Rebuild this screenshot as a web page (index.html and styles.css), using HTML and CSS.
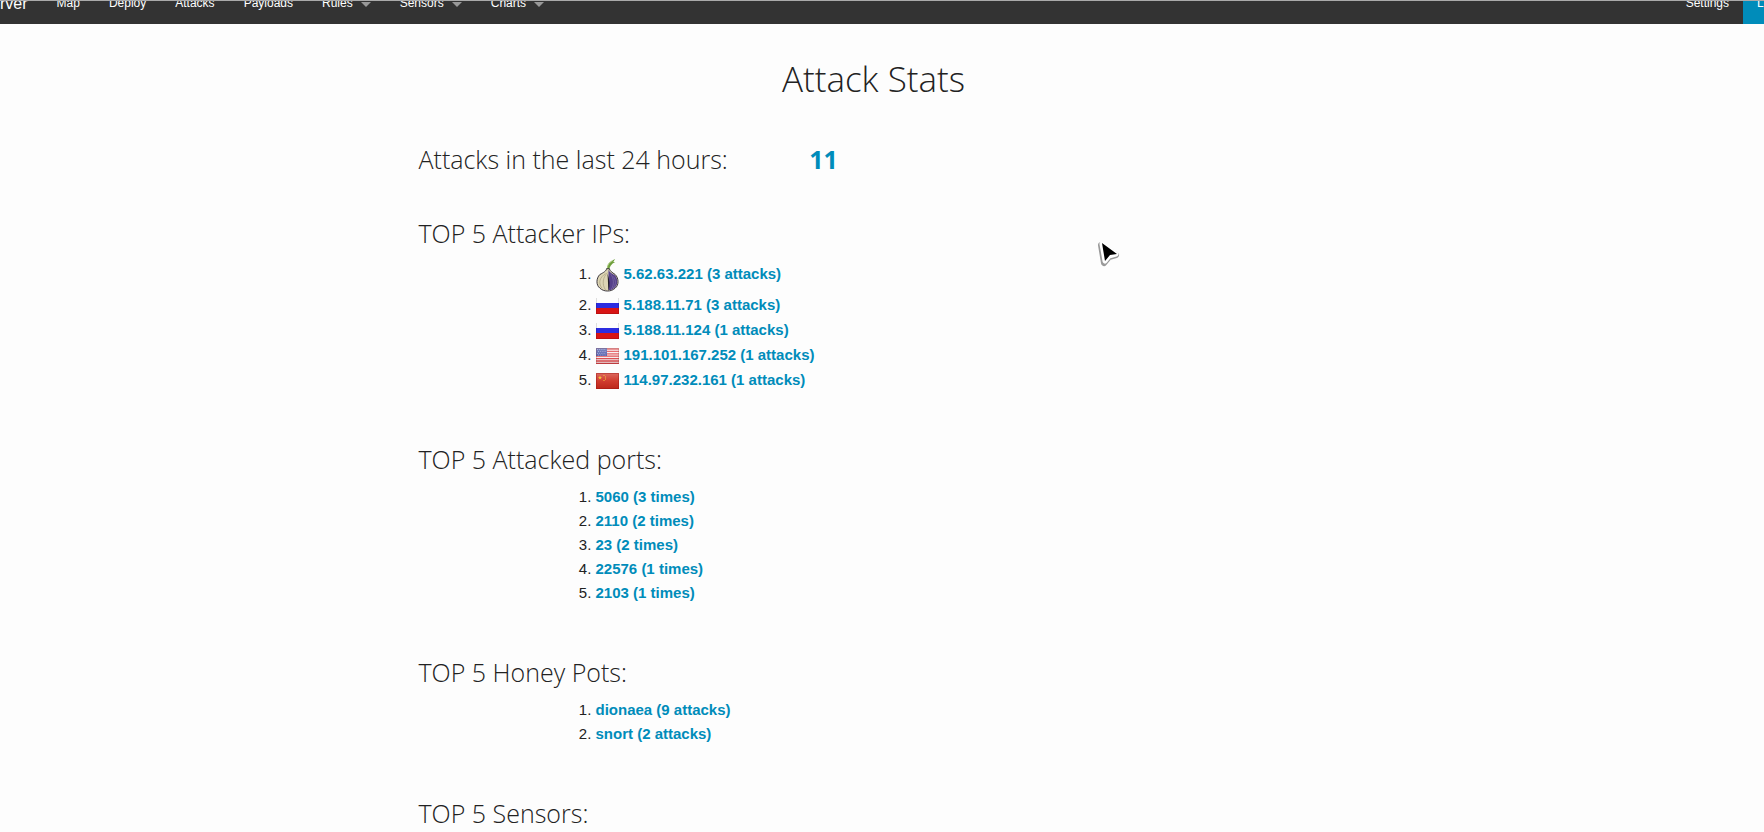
FILE: index.html
```html
<!DOCTYPE html>
<html lang="en">
<head>
<meta charset="utf-8">
<title>Attack Stats</title>
<link rel="stylesheet" href="styles.css">
</head>
<body>
<svg class="defs" aria-hidden="true">
  <defs>
    <linearGradient id="gloss" x1="0" y1="0" x2="0" y2="1">
      <stop offset="0" stop-color="#fff" stop-opacity=".3"/>
      <stop offset=".5" stop-color="#fff" stop-opacity=".08"/>
      <stop offset="1" stop-color="#000" stop-opacity=".08"/>
    </linearGradient>
    <symbol id="ru" viewBox="0 0 23 16">
      <path fill="#fdfdfd" d="M0 0h23v5H0z"/>
      <path fill="#2c2ce0" d="M0 5h23v6H0z"/>
      <path fill="#d81414" d="M0 10h23v6H0z"/>
      <path fill="none" stroke="#000" stroke-opacity=".12" d="M.5 0v15.5h22V0"/>
    </symbol>
  </defs>
</svg>
<header class="top-bar">
  <nav class="nav menu">
    <a class="brand" href="#">rver</a>
    <a href="#">Map</a>
    <a href="#">Deploy</a>
    <a href="#">Attacks</a>
    <a href="#">Payloads</a>
    <a class="has-menu" href="#">Rules</a>
    <a class="has-menu" href="#">Sensors</a>
    <a class="has-menu" href="#">Charts</a>
  </nav>
  <nav class="nav">
    <a href="#">Settings</a>
    <a class="logout" href="#">L</a>
  </nav>
</header>
<main class="page">
  <h1>Attack Stats</h1>
  <section class="total">
    <h2>Attacks in the last 24 hours:</h2>
    <a href="#">11</a>
  </section>
  <section class="ips">
    <h2>TOP 5 Attacker IPs:</h2>
    <ol>
      <li><a href="#"><svg class="onion" viewBox="0 0 24 34" preserveAspectRatio="none" aria-hidden="true">
        <path d="M11 11C12 6 14 3 20 0l-2 3 2 0C16 5 14 8 14 11z" fill="#6fa03c"/>
        <path d="M12 10C12 5 14 3 17 2" fill="none" stroke="#a9c77a"/>
        <path d="M11 10h3c0 2 3 4 6 6 4 4 4 11 0 14-4 4-12 4-16 0C0 27 0 20 4 16c4-2 7-4 7-6z" fill="#ddd5b4" stroke="#37333a"/>
        <path d="M13 11c1 3 4 4 7 6 3 4 3 9 0 12-2 2-4 3-7 3z" fill="#55408a"/>
        <path d="M12 15c2 6 3 12 1 18z" fill="#211c28"/>
        <path d="M15 15c4 5 4 12 1 16M18 18c3 4 3 8 0 12" fill="none" stroke="#8070a8" stroke-width=".7"/>
        <path d="M12 14C7 19 6 26 10 32M10 15C4 19 2 24 6 30" fill="none" stroke="#a69c7c" stroke-width=".7"/>
      </svg>5.62.63.221 (3 attacks)</a></li>
      <li><a href="#"><svg class="flag" aria-hidden="true"><use href="#ru"/></svg>5.188.11.71 (3 attacks)</a></li>
      <li><a href="#"><svg class="flag" aria-hidden="true"><use href="#ru"/></svg>5.188.11.124 (1 attacks)</a></li>
      <li><a href="#"><svg class="flag" viewBox="0 0 23 16" aria-hidden="true">
        <path fill="#f7efef" d="M0 0h23v16H0z"/>
        <path stroke="#e0474b" stroke-width="1.3" d="M0 1h23M0 3.4h23M0 5.8h23M0 8.2h23M0 10.6h23M0 13h23M0 15.3h23"/>
        <path fill="#4c58a8" d="M0 0h11v8H0z"/>
        <path stroke="#9098cc" stroke-dasharray="1 1.2" d="M1 1.5h9M2 3.5h8M1 5.5h9M2 7h8"/>
        <path fill="url(#gloss)" d="M0 0h23v16H0z"/>
        <path fill="none" stroke="#722" stroke-opacity=".2" d="M.5.5h22v15H.5z"/>
      </svg>191.101.167.252 (1 attacks)</a></li>
      <li><a href="#"><svg class="flag" viewBox="0 0 23 16" aria-hidden="true">
        <path fill="#cc2a1c" d="M0 0h23v16H0z"/>
        <path fill="url(#gloss)" d="M0 0h23v16H0z"/>
        <path fill="#f5c23c" d="M4 2.5l.6 1.4H6l-1.1 1 .4 1.5L4 5.5l-1.3.9.4-1.5-1.1-1h1.4zM7.5 2h1v1h-1zM9 3.5h1v1H9zM9 5.5h1v1H9zM7.5 7h1v1h-1z"/>
        <path fill="none" stroke="#911" stroke-opacity=".4" d="M.5.5h22v15H.5z"/>
      </svg>114.97.232.161 (1 attacks)</a></li>
    </ol>
  </section>
  <section>
    <h2>TOP 5 Attacked ports:</h2>
    <ol>
      <li><a href="#">5060 (3 times)</a></li>
      <li><a href="#">2110 (2 times)</a></li>
      <li><a href="#">23 (2 times)</a></li>
      <li><a href="#">22576 (1 times)</a></li>
      <li><a href="#">2103 (1 times)</a></li>
    </ol>
  </section>
  <section>
    <h2>TOP 5 Honey Pots:</h2>
    <ol>
      <li><a href="#">dionaea (9 attacks)</a></li>
      <li><a href="#">snort (2 attacks)</a></li>
    </ol>
  </section>
  <section>
    <h2>TOP 5 Sensors:</h2>
  </section>
</main>
<svg class="pointer" viewBox="0 0 22 26" aria-hidden="true">
  <path d="M2 3l15 10-7 2-5 6z" fill="#999" stroke="#999" stroke-width="6" stroke-linejoin="round"/>
  <path d="M3 2l14 10-7 2-4 5z" fill="#fff" stroke="#fff" stroke-width="5" stroke-linejoin="round"/>
  <path d="M3 1l15 11-7 1-5 6z" fill="#000"/>
</svg>
</body>
</html>
```
FILE: styles.css
```css
* {
  box-sizing: border-box;
}

html {
  overflow: hidden;
}

body {
  margin: 0;
  background: #fdfdfd;
  color: #222;
  font: 15px/24px "Liberation Sans", Arial, sans-serif;
}

a {
  color: #008cba;
  text-decoration: none;
}

.defs {
  position: absolute;
  width: 0;
  height: 0;
}

.top-bar {
  display: flex;
  justify-content: space-between;
  height: 24px;
  overflow: hidden;
  border-top: 1px solid #aaa;
  background: #333;
}

.nav {
  display: flex;
  align-items: flex-start;
}

.menu {
  gap: 1px;
}

.nav a {
  height: 45px;
  margin-top: -20px;
  padding: 0 14px;
  color: #fff;
  font-size: 12px;
  line-height: 45px;
}

.nav .brand {
  padding-left: 0;
  font-size: 16px;
}

.nav .has-menu::after {
  content: "";
  display: inline-block;
  margin-left: 8px;
  border: 5px solid transparent;
  border-top-color: #999;
  border-bottom: 0;
}

.nav .logout {
  width: 21px;
  padding: 0 0 0 14px;
  overflow: hidden;
  background: #008cba;
}

.page {
  max-width: 957px;
  margin: 0 auto;
  padding: 30px 32px 0 15px;
}

h1,
h2 {
  margin: 0;
  font-family: "Open Sans", sans-serif;
  font-weight: 300;
}

h1 {
  margin-bottom: 37px;
  font-size: 35px;
  line-height: 50px;
  text-align: center;
}

h2 {
  font-size: 25px;
  line-height: 36px;
}

section {
  margin-bottom: 49px;
}

section:last-child {
  margin-bottom: 0;
}

.total {
  display: grid;
  grid-template-columns: 5fr 7fr;
  column-gap: 20px;
  margin-bottom: 38px;
}

.total a {
  font: 700 25px/36px "Open Sans", sans-serif;
}

ol {
  margin: 8px 0 0;
  padding-left: 177px;
}

li a {
  font-weight: 700;
}

.ips li {
  line-height: 25px;
}

.flag,
.onion {
  width: 23px;
  margin-right: 5px;
}

.flag {
  height: 16px;
  vertical-align: -4px;
}

.onion {
  height: 33px;
  vertical-align: -13px;
}

.pointer {
  position: absolute;
  top: 242px;
  left: 1099px;
  width: 22px;
  height: 26px;
  overflow: visible;
}
```
